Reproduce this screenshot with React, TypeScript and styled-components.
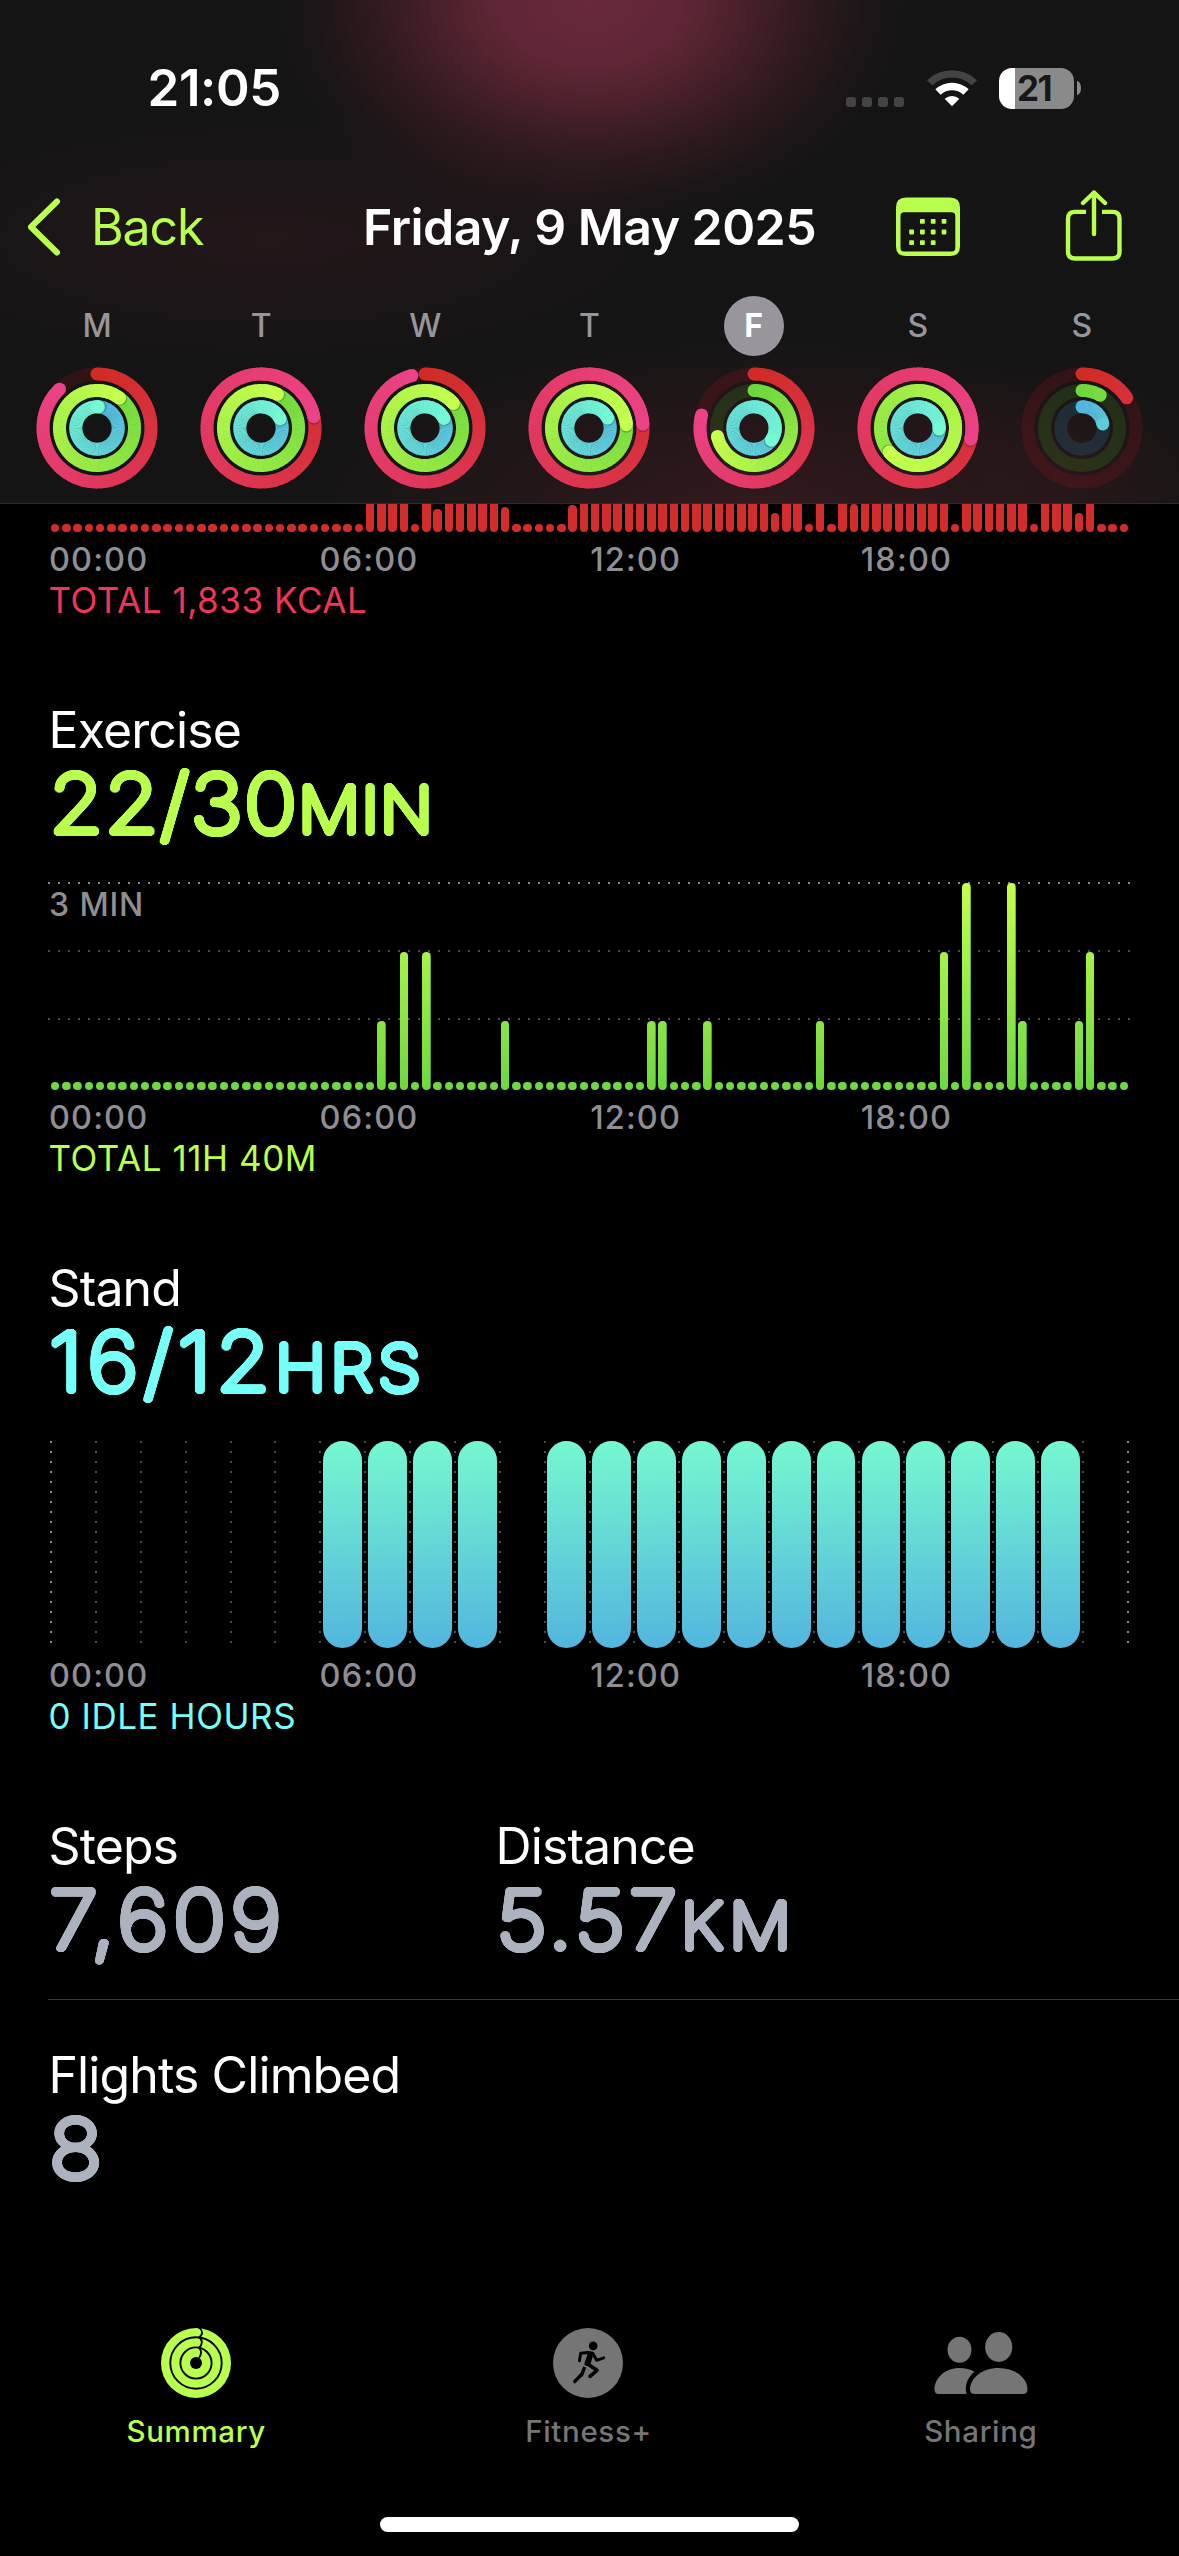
import React from "react";
import styled, { createGlobalStyle } from "styled-components";

const LIME = "#b9ff4e";
const CYAN = "#76fff6";
const SILVER = "#adb2bf";
const GREY = "#8e8e93";

const Global = createGlobalStyle`
  html, body { margin: 0; background: #000; }
  * { box-sizing: border-box; }
`;

const Screen = styled.div`
  width: 1179px;
  height: 2556px;
  display: flex;
  flex-direction: column;
  overflow: hidden;
  background: #000;
  color: #fff;
  font-family: Inter, "Noto Sans", sans-serif;
  font-feature-settings: "calt" 0;
`;

/* ---------- header ---------- */

const Header = styled.header`
  height: 504px;
  flex: none;
  border-bottom: 1px solid #2c2b2d;
  background:
    radial-gradient(ellipse 325px 235px at 590px 0, rgba(104, 41, 58, 1) 0%, rgba(102, 40, 56, 0.93) 28%, rgba(94, 37, 50, 0.7) 48%, rgba(86, 34, 46, 0.38) 68%, rgba(76, 32, 42, 0.14) 85%, rgba(60, 26, 34, 0) 100%),
    radial-gradient(ellipse 420px 130px at 270px 240px, rgba(41, 24, 28, 0.75), rgba(41, 24, 28, 0)),
    radial-gradient(ellipse 460px 180px at 760px 510px, rgba(56, 26, 31, 0.85), rgba(50, 26, 30, 0)),
    radial-gradient(ellipse 200px 120px at 1060px 480px, rgba(46, 24, 27, 0.5), rgba(46, 24, 27, 0)),
    #141414;
`;

const StatusBar = styled.div`
  height: 176px;
  display: flex;
  align-items: center;
  justify-content: space-between;
  padding: 0 98px 0 147.5px;
`;

const Clock = styled.span`
  font-size: 51px;
  font-weight: 600;
  line-height: 60px;
  letter-spacing: -0.4px;
`;

const StatusIcons = styled.div`
  display: flex;
  align-items: center;
`;

const SignalDots = styled.div`
  display: flex;
  gap: 6px;
  margin: 27px 24px 0 0;
`;

const SignalDot = styled.i`
  width: 10px;
  height: 10px;
  border-radius: 3px;
  background: #454345;
`;

const WifiIcon = styled.svg`
  width: 50px;
  height: 38px;
  margin-left: -1px;
  margin-right: 22px;
`;

const Battery = styled.div`
  width: 75px;
  height: 41px;
  border-radius: 13px;
  display: flex;
  align-items: center;
  padding-left: 18px;
  background: linear-gradient(to right, #fff 16px, #8a8a8a 16px);
  color: #171717;
  font-size: 35px;
  font-weight: 700;
  line-height: 41px;
  letter-spacing: -1.5px;
`;

const BatteryNub = styled.i`
  width: 4px;
  height: 14px;
  margin-left: 3px;
  border-radius: 0 4px 4px 0 / 0 7px 7px 0;
  background: #8a8a8a;
`;

const NavBar = styled.nav`
  height: 102px;
  display: grid;
  grid-template-columns: 363px 1fr 64px 105px 114px;
  align-items: center;
`;

const BackLink = styled.div`
  display: flex;
  align-items: center;
  gap: 29px;
  padding-left: 26px;
  color: ${LIME};
  font-size: 50px;
  line-height: 60px;
  letter-spacing: -1.1px;
`;

const Title = styled.h1`
  margin: 0;
  font-size: 50px;
  font-weight: 600;
  line-height: 60px;
  letter-spacing: -0.55px;
  white-space: nowrap;
`;

const Week = styled.div`
  display: grid;
  grid-template-columns: repeat(7, 1fr);
  padding: 18px 15px 0;
`;

const Day = styled.div`
  display: flex;
  flex-direction: column;
  align-items: center;
  gap: 10px;
`;

const DayLetter = styled.span<{ $on?: boolean }>`
  width: 60px;
  height: 60px;
  border-radius: 50%;
  text-align: center;
  font-size: 32px;
  line-height: 60px;
  font-weight: ${(p) => (p.$on ? 700 : 500)};
  color: ${(p) => (p.$on ? "#fff" : "#98959c")};
  background: ${(p) => (p.$on ? "#98959c" : "transparent")};
`;

type RGB = [number, number, number];
const RINGS: { r: number; from: RGB; to: RGB; track: string }[] = [
  { r: 54, from: [209, 43, 38], to: [236, 66, 136], track: "rgba(190,20,30,0.17)" },
  { r: 37.5, from: [108, 216, 62], to: [198, 255, 78], track: "rgba(80,190,30,0.16)" },
  { r: 21.2, from: [82, 182, 223], to: [117, 250, 210], track: "rgba(40,140,180,0.2)" },
];

const point = (r: number, deg: number) => {
  const a = ((deg - 90) * Math.PI) / 180;
  return [r * Math.cos(a), r * Math.sin(a)];
};

function Ring({ r, from, to, track, sweep }: { r: number; from: RGB; to: RGB; track: string; sweep: number }) {
  const w = 13;
  const span = Math.max(sweep, 255);
  const color = (t: number) => `rgb(${from.map((c, i) => Math.round(c + (to[i] - c) * t)).join(",")})`;
  const step = 4;
  const arc = (a: number) => {
    const [x1, y1] = point(r, a);
    const [x2, y2] = point(r, Math.min(a + step + 0.8, sweep));
    return <path key={a} d={`M${x1} ${y1}A${r} ${r} 0 0 1 ${x2} ${y2}`} stroke={color(a / span)} strokeWidth={w} fill="none" />;
  };
  const starts: number[] = [];
  for (let a = 0; a < sweep; a += step) starts.push(a);
  const tail = starts.filter((a) => a > sweep - 30);
  const body = starts.filter((a) => a <= sweep - 30);
  const [sx, sy] = point(r, 0);
  const [ex, ey] = point(r, sweep);
  const [hx, hy] = point(r, sweep + 90 / r);
  return (
    <g>
      <circle r={r} fill="none" stroke={track} strokeWidth={w} />
      <circle cx={sx} cy={sy} r={w / 2} fill={color(0)} />
      {body.map(arc)}
      {sweep > 360 && <circle cx={hx} cy={hy} r={w / 2} fill="#000" opacity={0.2} />}
      {tail.map(arc)}
      <circle cx={ex} cy={ey} r={w / 2} fill={color(sweep / span)} />
    </g>
  );
}

const WEEK: { letter: string; sweeps: number[]; on?: boolean }[] = [
  { letter: "M", sweeps: [316, 397, 364] },
  { letter: "T", sweeps: [438, 386, 424] },
  { letter: "W", sweeps: [346, 409, 423] },
  { letter: "T", sweeps: [446, 445, 422] },
  { letter: "F", sweeps: [284, 257, 485], on: true },
  { letter: "S", sweeps: [462, 590, 453] },
  { letter: "S", sweeps: [56, 29, 79] },
];

/* ---------- sections ---------- */

const Section = styled.section`
  display: flex;
  flex-direction: column;
  padding: 0 49px 0 48px;
  margin-bottom: 80px;
`;

const Heading = styled.h2`
  margin: 0;
  font-size: 50px;
  font-weight: 400;
  line-height: 60px;
  letter-spacing: -0.9px;
  padding-left: 0.5px;
`;

/* Thin strokes grown by a ring of solid shadows, which gives the round stroke ends. */
const rounded = (r: number) =>
  Array.from({ length: 24 }, (_, i) => {
    const a = (i * Math.PI) / 12;
    return `${(r * Math.cos(a)).toFixed(2)}px ${(r * Math.sin(a)).toFixed(2)}px 0 currentColor`;
  }).join(",");

const Value = styled.div<{ $color: string; $track?: number }>`
  color: ${(p) => p.$color};
  width: max-content;
  height: 84px;
  padding-left: 1px;
  font-size: 81.5px;
  font-weight: 200;
  line-height: 87px;
  letter-spacing: ${(p) => p.$track ?? 1}px;
  white-space: nowrap;
  text-shadow: ${rounded(2.6)};
  transform: scaleX(1.08);
  transform-origin: left;
`;

const Unit = styled.span<{ $track?: number }>`
  font-size: 64px;
  letter-spacing: ${(p) => p.$track ?? 1}px;
`;

const Axis = styled.div`
  display: grid;
  grid-template-columns: repeat(4, 270.6px);
  margin-top: 7px;
  padding-left: 1px;
  height: 41px;
  color: ${GREY};
  font-size: 32.5px;
  font-weight: 500;
  line-height: 41px;
  letter-spacing: 1.1px;
`;

const Total = styled.div<{ $color: string }>`
  color: ${(p) => p.$color};
  font-size: 35px;
  line-height: 40px;
  letter-spacing: 0.55px;
  padding-left: 0.5px;
`;

const Plot = styled.div<{ $h: number; $gap?: number }>`
  display: grid;
  grid-template-rows: 100%;
  height: ${(p) => p.$h}px;
  margin-top: ${(p) => p.$gap ?? 0}px;
  overflow: ${(p) => (p.$gap ? "visible" : "hidden")};
  & > * {
    grid-area: 1 / 1;
  }
`;

const Bars = styled.div`
  display: grid;
  grid-template-columns: repeat(96, 11.252px);
  grid-template-rows: 100%;
  justify-items: center;
  align-items: end;
  height: 100%;
  padding-left: 1.5px;
`;

const Bar = styled.i<{ $h: number; $fill: string }>`
  width: 8.4px;
  height: ${(p) => p.$h}px;
  border-radius: 4.2px;
  background: ${(p) => p.$fill};
  background-size: 100% 207px;
  background-position: bottom;
`;

const Rules = styled.div`
  display: flex;
  flex-direction: column;
  gap: 66px;
  margin-top: -1px;
`;

const Rule = styled.i<{ $c: string }>`
  height: 2px;
  background: repeating-linear-gradient(to right, ${(p) => p.$c} 0 2px, transparent 2px 10px);
`;

const Scale = styled.span`
  color: ${GREY};
  font-size: 32px;
  font-weight: 500;
  line-height: 40px;
  letter-spacing: 0.9px;
  padding: 2px 0 0 1px;
`;

const HourLines = styled.div`
  display: flex;
  justify-content: space-between;
  height: 202px;
  padding: 0 1px 0 2px;
`;

const HourLine = styled.i<{ $c: string }>`
  width: 2px;
  background: repeating-linear-gradient(to bottom, ${(p) => p.$c} 0 2px, transparent 2px 10px);
`;

const Hours = styled.div`
  display: grid;
  grid-template-columns: repeat(24, 44.86px);
  padding-left: 3px;
  justify-items: center;
`;

const Hour = styled.i<{ $on: boolean }>`
  width: 38.8px;
  height: 207px;
  border-radius: 19.4px;
  background: ${(p) => (p.$on ? "linear-gradient(178deg, #75f8d0, #53b5de)" : "none")};
`;

const RED_FILL = "#d22d2a";
const GREEN_FILL = "linear-gradient(to top, #6dd840, #c3ff4d)";

const moveShort: Record<number, number> = { 34: 23.5, 40: 25, 46: 27, 64: 19.5, 71: 28, 91: 19.5 };
const moveIdle = new Set([32, 41, 42, 43, 44, 45, 67, 69, 80, 87, 93, 94, 95]);
const MOVE = Array.from({ length: 96 }, (_, i) => (i < 28 || moveIdle.has(i) ? 8.4 : moveShort[i] ?? 60));

const minutes: Record<number, number> = { 29: 1, 31: 2, 33: 2, 40: 1, 53: 1, 54: 1, 58: 1, 68: 1, 79: 2, 81: 3, 85: 3, 86: 1, 91: 1, 92: 2 };
const EXERCISE = Array.from({ length: 96 }, (_, i) => (minutes[i] ? minutes[i] * 69 : 8.4));

const STOOD = Array.from({ length: 24 }, (_, h) => (h >= 6 && h <= 9) || (h >= 11 && h <= 22));

const HoursAxis = () => (
  <Axis>
    {["00:00", "06:00", "12:00", "18:00"].map((t) => (
      <span key={t}>{t}</span>
    ))}
  </Axis>
);

const Stats = styled.section`
  display: grid;
  grid-template-columns: 447px 1fr;
  margin-left: 48px;
  padding-bottom: 39px;
  border-bottom: 1px solid #38383a;
  & + & {
    padding-top: 45px;
    border: 0;
  }
`;

/* ---------- tab bar ---------- */

const TabBar = styled.footer`
  margin-top: auto;
  height: 256px;
  display: flex;
  flex-direction: column;
  align-items: center;
  justify-content: space-between;
  padding: 27px 0 24px;
`;

const Tabs = styled.div`
  width: 100%;
  display: grid;
  grid-template-columns: repeat(3, 1fr);
  padding-right: 2px;
`;

const Tab = styled.div<{ $on?: boolean }>`
  display: flex;
  flex-direction: column;
  align-items: center;
  gap: 12px;
  color: ${(p) => (p.$on ? LIME : "#757575")};
  font-size: 29.5px;
  font-weight: 500;
  line-height: 40px;
  letter-spacing: 0.65px;
  svg {
    height: 72px;
  }
`;

const HomeIndicator = styled.i`
  width: 419px;
  height: 15px;
  border-radius: 8px;
  background: #fff;
`;

const CALENDAR_DOTS = [
  [26.4, 24.3], [37.2, 24.3], [48, 24.3],
  [15.6, 35], [26.4, 35], [37.2, 35], [48, 35],
  [15.6, 45.7], [26.4, 45.7], [37.2, 45.7],
];

export default function App() {
  return (
    <Screen>
      <Global />
      <Header>
        <StatusBar>
          <Clock>21:05</Clock>
          <StatusIcons>
            <SignalDots>
              <SignalDot />
              <SignalDot />
              <SignalDot />
              <SignalDot />
            </SignalDots>
            <WifiIcon viewBox="0 0 150 112">
              <path d="M0 33 A108 108 0 0 1 150 33 L134 48 A86 86 0 0 0 16 48Z" fill="#454345" />
              <path d="M25 60 A73 73 0 0 1 125 60 L109 76 A50 50 0 0 0 41 76Z" fill="#fff" />
              <path d="M53 88 A34 34 0 0 1 97 88 L78 108 Q75 111 72 108Z" fill="#fff" />
            </WifiIcon>
            <Battery>21</Battery>
            <BatteryNub />
          </StatusIcons>
        </StatusBar>
        <NavBar>
          <BackLink>
            <svg width="36" height="60" viewBox="0 0 36 60" fill="none" stroke={LIME} strokeWidth="6" strokeLinecap="round" strokeLinejoin="round">
              <path d="M31 4.5 L5 30 L31 55.5" />
            </svg>
            Back
          </BackLink>
          <Title>Friday, 9 May 2025</Title>
          <svg width="64" height="60" viewBox="0 0 64 60">
            <path
              fillRule="evenodd"
              fill={LIME}
              d="M10 0.5H54Q64 0.5 64 10.5V49.5Q64 59 54 59H10Q0 59 0 49.5V10.5Q0 0.5 10 0.5Z M8 15.3Q4.5 15.3 4.5 19V51Q4.5 54.5 8 54.5H55.5Q59.3 54.5 59.3 51V19Q59.3 15.3 55.5 15.3Z"
            />
            {CALENDAR_DOTS.map(([x, y]) => (
              <rect key={`${x}-${y}`} x={x - 2.4} y={y - 2.4} width="4.8" height="4.8" rx="0.8" fill={LIME} />
            ))}
          </svg>
          <span />
          <svg width="58" height="74" viewBox="0 0 58 74" fill="none" stroke={LIME} strokeWidth="4.4" strokeLinecap="round" strokeLinejoin="round">
            <path strokeLinecap="butt" d="M21 21.9H10Q3 21.9 3 28.9V61.5Q3 68.5 10 68.5H47.5Q54.5 68.5 54.5 61.5V28.9Q54.5 21.9 47.5 21.9H37" />
            <path d="M29 44V2.5M18 13L29 2.5L40 13" />
          </svg>
        </NavBar>
        <Week>
          {WEEK.map((d, i) => (
            <Day key={i}>
              <DayLetter $on={d.on}>{d.letter}</DayLetter>
              <svg width="124" height="124" viewBox="-62 -62 124 124">
                {RINGS.map((ring, k) => (
                  <Ring key={k} {...ring} sweep={d.sweeps[k]} />
                ))}
              </svg>
            </Day>
          ))}
        </Week>
      </Header>

      <Section>
        <Plot $h={28}>
          <Bars>
            {MOVE.map((h, i) => (
              <Bar key={i} $h={h} $fill={RED_FILL} />
            ))}
          </Bars>
        </Plot>
        <HoursAxis />
        <Total $color="#f03657">TOTAL 1,833 KCAL</Total>
      </Section>

      <Section>
        <Heading>Exercise</Heading>
        <Value $color={LIME}>
          22/30<Unit>MIN</Unit>
        </Value>
        <Plot $h={207} $gap={39}>
          <Rules>
            <Rule $c="#8a8a8e" />
            <Rule $c="#4b4b4e" />
            <Rule $c="#4b4b4e" />
          </Rules>
          <Scale>3 MIN</Scale>
          <Bars>
            {EXERCISE.map((h, i) => (
              <Bar key={i} $h={h} $fill={GREEN_FILL} />
            ))}
          </Bars>
        </Plot>
        <HoursAxis />
        <Total $color={LIME}>TOTAL 11H 40M</Total>
      </Section>

      <Section>
        <Heading>Stand</Heading>
        <Value $color={CYAN} $track={4.4}>
          16/12<Unit $track={4}>HRS</Unit>
        </Value>
        <Plot $h={207} $gap={39}>
          <HourLines>
            {Array.from({ length: 25 }, (_, i) => (
              <HourLine key={i} $c={i % 24 === 0 ? "#8a8a8e" : "#4b4b4e"} />
            ))}
          </HourLines>
          <Hours>
            {STOOD.map((on, i) => (
              <Hour key={i} $on={on} />
            ))}
          </Hours>
        </Plot>
        <HoursAxis />
        <Total $color={CYAN}>0 IDLE HOURS</Total>
      </Section>

      <Stats>
        <div>
          <Heading>Steps</Heading>
          <Value $color={SILVER} $track={3.9}>7,609</Value>
        </div>
        <div>
          <Heading>Distance</Heading>
          <Value $color={SILVER} $track={3.1}>
            5.57<Unit $track={5}>KM</Unit>
          </Value>
        </div>
      </Stats>
      <Stats>
        <div>
          <Heading>Flights Climbed</Heading>
          <Value $color={SILVER}>8</Value>
        </div>
      </Stats>

      <TabBar>
        <Tabs>
          <Tab $on>
            <svg width="72" viewBox="-36 -36 72 72" fill="none" stroke="#000" strokeWidth="1.9">
              <circle r="35" fill={LIME} stroke="none" />
              <circle r="25.7" />
              <circle r="15.6" />
              <circle r="6" fill="#000" stroke="none" />
              <path d="M2 -36 C7.5 -33 7 -28 3 -25.7 M3 -25.7 C7 -23 6.5 -18 3 -15.5 M3 -15.5 C6.5 -12 5 -8 3 -5" />
            </svg>
            Summary
          </Tab>
          <Tab>
            <svg width="72" viewBox="-3 -3 216 216" fill="none" stroke="#000" strokeLinecap="round" strokeLinejoin="round">
              <circle cx="105" cy="105" r="105" fill="#757575" stroke="none" />
              <circle cx="120.5" cy="53.5" r="13" fill="#000" stroke="none" />
              <path strokeWidth="9" d="M79.5 98L83 76L106 73.5L119 76L131 97L152 89.5" />
              <path strokeWidth="14" d="M111 79L101 107" />
              <path strokeWidth="9" d="M116 80L108 108" />
              <path strokeWidth="11" d="M103 107L132 127L111 145" />
              <path strokeWidth="10" strokeLinecap="butt" d="M95 117L87 139L82 144" />
              <path strokeWidth="10" d="M87 138L65 161" />
            </svg>
            Fitness+
          </Tab>
          <Tab>
            <svg width="94" viewBox="0 0 94 72" fill="#757575">
              <ellipse cx="25.5" cy="22.7" rx="12" ry="13" />
              <ellipse cx="64.7" cy="20" rx="13.6" ry="15" />
              <path d="M5 67Q0.5 67 0.5 62.5C0.5 51 11 41 25.5 41Q34 41 40.5 44.7C34 50 30 58 32.5 67Z" />
              <path d="M41 67Q36 67 36 62.5C36 51 48 41 64.7 41C81.5 41 93.5 51 93.5 62.5Q93.5 67 88.5 67Z" />
            </svg>
            Sharing
          </Tab>
        </Tabs>
        <HomeIndicator />
      </TabBar>
    </Screen>
  );
}
